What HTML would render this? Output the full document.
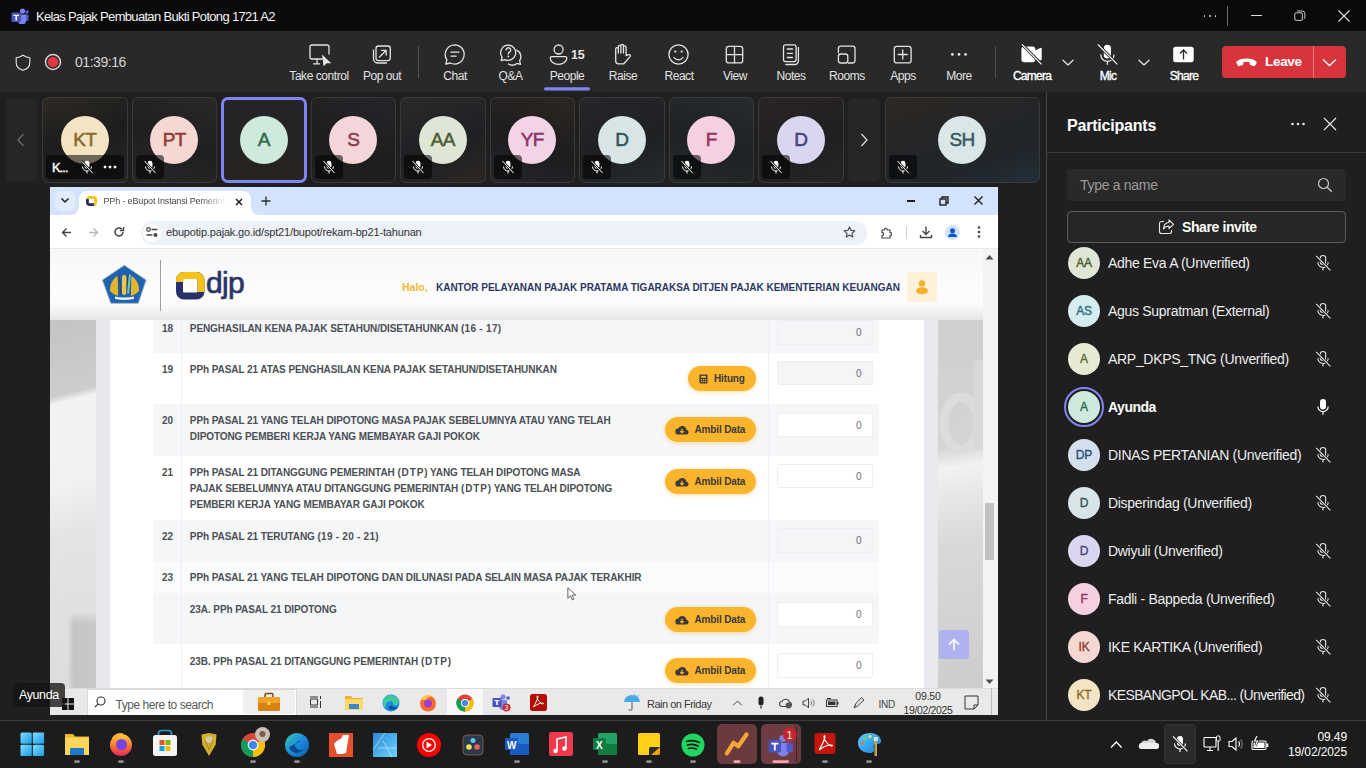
<!DOCTYPE html>
<html><head><meta charset="utf-8">
<style>
*{box-sizing:border-box}
html,body{margin:0;padding:0}
body{width:1366px;height:768px;overflow:hidden;position:relative;background:#1f1f1f;font-family:"Liberation Sans",sans-serif;color:#fff}
.a{position:absolute}
svg{display:block}
/* title bar */
#title{left:0;top:0;width:1366px;height:31px;background:#0a0a0a}
/* toolbar */
#tb{left:0;top:31px;width:1366px;height:61px;background:#292929}
.tbi{position:absolute;top:0;height:61px;width:60px;margin-left:-30px}
.tbi svg{position:absolute;left:20px;top:13px}
.tl{position:absolute;top:69px;width:90px;margin-left:-45px;text-align:center;font-size:12px;line-height:14px;letter-spacing:-0.45px;color:#e2e2e2;white-space:nowrap}
.tl.b{color:#fff;letter-spacing:-0.75px;-webkit-text-stroke:0.35px #fff}
.av{width:48px;height:48px;border-radius:50%;text-align:center;line-height:48px;font-size:19px;letter-spacing:-0.6px;-webkit-text-stroke:0.55px currentColor}
.pav{width:32px;height:32px;border-radius:50%;text-align:center;line-height:32px;font-size:12px;letter-spacing:-0.2px;-webkit-text-stroke:0.35px currentColor}
.pn{left:1108px;font-size:14px;line-height:18px;letter-spacing:-0.3px;color:#ececec;white-space:nowrap}
.tt{font-size:10px;line-height:16.3px;font-weight:bold;letter-spacing:-0.08px;color:#4b4f54;white-space:nowrap}
.btn{height:25px;border-radius:13px;background:#fbb52c;box-shadow:0 1px 4px rgba(251,181,44,.45);font-size:10px;font-weight:bold;color:#3a3a3a;letter-spacing:-0.15px;line-height:13px}
.inp{left:777px;width:95.5px;height:24.5px;border:1px solid #eceef1;border-radius:2px;font-size:10px;line-height:24px;text-align:right;padding-right:10px;color:#707070}
.tbl{position:absolute;top:40px;left:-20px;right:-20px;text-align:center;font-size:12px;letter-spacing:-0.4px;color:#e6e6e6;white-space:nowrap}
</style></head>
<body>
<!-- TITLE BAR -->
<div id="title" class="a">
  <svg class="a" style="left:11px;top:8px" width="18" height="16" viewBox="0 0 18 16">
    <circle cx="11.5" cy="3" r="2.6" fill="#7b83eb"/><circle cx="16" cy="4" r="1.8" fill="#5059c9"/>
    <path d="M13 6.5h4.5v5a2.3 2.3 0 0 1-4.5 0z" fill="#5059c9"/>
    <path d="M7 6.5h8v6a4 4 0 0 1-8 0z" fill="#7b83eb"/>
    <rect x="0.5" y="4.5" width="9.5" height="9.5" rx="1" fill="#4b53bc"/>
    <path d="M2.5 6.8h5.5v1.3H6v4.5H4.5V8.1h-2z" fill="#fff"/>
  </svg>
  <div class="a" style="left:36px;top:9px;font-size:13px;letter-spacing:-0.68px;color:#f2f2f2;white-space:nowrap">Kelas Pajak Pembuatan Bukti Potong 1721 A2</div>
  <div class="a" style="left:1203px;top:15px;width:14px;height:2px">
    <span class="a" style="left:0.5px;top:0;width:1.8px;height:1.8px;border-radius:1px;background:#ddd"></span>
    <span class="a" style="left:6px;top:0;width:1.8px;height:1.8px;border-radius:1px;background:#ddd"></span>
    <span class="a" style="left:11.5px;top:0;width:1.8px;height:1.8px;border-radius:1px;background:#ddd"></span>
  </div>
  <div class="a" style="left:1226.5px;top:6px;width:1px;height:20px;background:#6a6a6a"></div>
  <div class="a" style="left:1251px;top:15px;width:11px;height:1px;background:#ddd"></div>
  <svg class="a" style="left:1294px;top:10px" width="12" height="12" viewBox="0 0 12 12"><rect x="0.8" y="2.8" width="7.6" height="7.6" rx="1.4" fill="none" stroke="#dcdcdc" stroke-width="0.9"/><path d="M3 1h5.2A2.6 2.6 0 0 1 10.8 3.6V8.8" fill="none" stroke="#dcdcdc" stroke-width="0.9"/></svg>
  <svg class="a" style="left:1338px;top:10px" width="12" height="12" viewBox="0 0 12 12"><path d="M0.5 0.5l11 11M11.5 0.5l-11 11" stroke="#ddd" stroke-width="1.1"/></svg>
</div>

<!-- TOOLBAR -->
<div id="tb" class="a">
  <!-- shield -->
  <svg class="a" style="left:15px;top:23px" width="16" height="17" viewBox="0 0 16 17"><path d="M8 1.2C10.5 2.8 12.8 3.6 14.8 3.7v5.2c0 3.4-2.3 5.8-6.8 7.4C3.5 14.7 1.2 12.3 1.2 8.9V3.7C3.2 3.6 5.5 2.8 8 1.2z" fill="none" stroke="#e8e8e8" stroke-width="1.1"/></svg>
  <!-- record -->
  <svg class="a" style="left:44px;top:22px" width="18" height="18" viewBox="0 0 18 18"><circle cx="9" cy="9" r="7.5" fill="none" stroke="#d6d6d6" stroke-width="1.5"/><circle cx="9" cy="9" r="5.3" fill="#e0383e"/></svg>
  <div class="a" style="left:75px;top:23px;font-size:14px;letter-spacing:-0.45px;color:#d4d4d4">01:39:16</div>
</div>
<svg class="a" style="left:0;top:31px" width="1366" height="61" viewBox="0 31 1366 61">
 <g fill="none" stroke="#e4e4e4" stroke-width="1.3" stroke-linecap="round" stroke-linejoin="round">
  <!-- take control -->
  <path d="M322 59H312a2 2 0 0 1-2-2V47a2 2 0 0 1 2-2h15a2 2 0 0 1 2 2v7"/>
  <path d="M317 59.5v4M313.5 63.8h6"/>
  <!-- pop out -->
  <rect x="376" y="46" width="14.3" height="14.6" rx="2.5"/>
  <path d="M373.5 50v8.5a4.5 4.5 0 0 0 4.5 4.5h8.5"/>
  <path d="M379.5 57l6.5-6.5M381.5 50.3h4.7v4.7"/>
  <!-- chat -->
  <path d="M454.7 44.8a9.6 9.6 0 1 1-4.4 18.2l-4.6 1.2 1.2-4.4a9.6 9.6 0 0 1 7.8-15z"/>
  <path d="M451 52.2h8M451 56.2h5"/>
  <!-- q&a -->
<g transform="translate(0.3 0.7)">  <path d="M508 44.5a7.6 7.6 0 1 1-3.6 14.4l-3.6 1 1-3.4a7.6 7.6 0 0 1 6.2-12z"/>
  <path d="M516.5 49.5a7.2 7.2 0 0 1 2.8 10.5l0.9 3.6-3.6-0.9a7.2 7.2 0 0 1-8.5 0.6"/>
  <path d="M505.8 49.3a2.3 2.3 0 1 1 3.4 2.1c-0.8 0.5-1.2 1-1.2 1.9"/>
</g>
  <!-- people -->
  <circle cx="558.6" cy="49.5" r="4.5"/>
  <path d="M550.2 58a1.4 1.4 0 0 1 1.4-1.4h13.8a1.4 1.4 0 0 1 1.4 1.4c0 3.6-3.7 6.3-8.3 6.3s-8.3-2.7-8.3-6.3z"/>
  <!-- raise -->
  <path d="M615.7 61.3V48.9a1.3 1.3 0 0 1 2.6 0V53V46.6a1.3 1.3 0 0 1 2.6 0V53V45.7a1.3 1.3 0 0 1 2.6 0V53V47.2a1.3 1.3 0 0 1 2.6 0v8.4l2.7-0.9a1.2 1.2 0 0 1 1.3 1.9L623.8 63.8H618.6a2.9 2.9 0 0 1-2.9-2.5z"/>
  <!-- react -->
  <circle cx="678.5" cy="54.5" r="9.6"/>
  <path d="M674 57.5a5.5 5.5 0 0 0 9 0"/>
  <!-- view -->
  <rect x="726.3" y="46.3" width="16.4" height="16.6" rx="2.5"/>
  <path d="M734.5 46.5v16.4M726.5 54.6h16"/>
  <!-- notes -->
  <rect x="783.5" y="44.8" width="12.6" height="16.8" rx="2"/>
  <path d="M798.4 47.5v13.5a3.5 3.5 0 0 1-3.5 3.5h-9"/>
  <path d="M787.3 49h5.2M787.3 53.3h5.2M787.3 57.5h5.2"/>
  <!-- rooms -->
  <path d="M838.4 52.8V48.6a2.4 2.4 0 0 1 2.4-2.4h11.8a2.4 2.4 0 0 1 2.4 2.4v12a2.4 2.4 0 0 1-2.4 2.4h-4.4"/>
  <rect x="838.4" y="54" width="9.4" height="9" rx="2.5"/>
  <!-- apps -->
  <rect x="894.3" y="46.3" width="16.8" height="16.6" rx="2.5"/>
  <path d="M902.7 50v9M898.2 54.5h9"/>
  <!-- chevrons -->
  <path d="M1063 60.3l5 4.6 5-4.6M1139 60.3l5 4.6 5-4.6"/>
  <!-- mic off -->
  <path d="M1100.8 54.8a6.6 6.6 0 0 0 13.2 0M1107.4 61.4v3"/>
 </g>
 <!-- take control cursor -->
 <path d="M322 54.5l9.3 8.8h-4.6l-3.2 3z" fill="#e4e4e4"/>
 <!-- more dots -->
 <circle cx="952.4" cy="54.4" r="1.4" fill="#e4e4e4"/><circle cx="959" cy="54.4" r="1.4" fill="#e4e4e4"/><circle cx="965.6" cy="54.4" r="1.4" fill="#e4e4e4"/>
 <!-- react eyes -->
 <circle cx="675.3" cy="51.6" r="1.1" fill="#e4e4e4"/><circle cx="681.7" cy="51.6" r="1.1" fill="#e4e4e4"/>
 <!-- qa dot -->
 <circle cx="508.3" cy="56.5" r="0.9" fill="#e4e4e4"/>
 <!-- separators -->
 <path d="M418.5 46v32M995.5 46v32" stroke="#505050" stroke-width="1"/>
 <!-- camera -->
 <rect x="1021.4" y="46.5" width="14" height="15.7" rx="3" fill="#fff"/>
 <path d="M1035 50.5l5.2-2.5a1 1 0 0 1 1.5 0.9v10.4a1 1 0 0 1-1.5 0.9l-5.2-2.5z" fill="#fff"/>
 <path d="M1022 44.3l19.5 20" stroke="#292929" stroke-width="3"/>
 <path d="M1022 44.3l19.5 20" stroke="#fff" stroke-width="1.2"/>
 <!-- mic -->
 <rect x="1103.8" y="44.8" width="7.2" height="13.8" rx="3.6" fill="#fff"/>
 <path d="M1097.8 44.3l19.5 20" stroke="#292929" stroke-width="3"/>
 <path d="M1097.8 44.3l19.5 20" stroke="#fff" stroke-width="1.2"/>
 <!-- share -->
 <rect x="1173.2" y="46.8" width="20.5" height="15.4" rx="2.5" fill="#fff"/>
 <path d="M1183.5 59.5v-9.3M1180 53.5l3.5-3.5 3.5 3.5" fill="none" stroke="#292929" stroke-width="1.3"/>
 <!-- people underline -->
 <rect x="544" y="87.2" width="46" height="3.2" rx="1.6" fill="#7f85f5"/>
</svg>
<div class="a" style="left:571px;top:48px;font-size:12.5px;font-weight:bold;color:#e4e4e4;letter-spacing:-0.2px">15</div>
<div class="a tl" style="left:319px">Take control</div>
<div class="a tl" style="left:382px">Pop out</div>
<div class="a tl" style="left:455px">Chat</div>
<div class="a tl" style="left:510.5px">Q&amp;A</div>
<div class="a tl" style="left:567px">People</div>
<div class="a tl" style="left:623px">Raise</div>
<div class="a tl" style="left:679px">React</div>
<div class="a tl" style="left:735px">View</div>
<div class="a tl" style="left:791px">Notes</div>
<div class="a tl" style="left:847px">Rooms</div>
<div class="a tl" style="left:903px">Apps</div>
<div class="a tl" style="left:959px">More</div>
<div class="a tl b" style="left:1032px">Camera</div>
<div class="a tl b" style="left:1108px">Mic</div>
<div class="a tl b" style="left:1184px">Share</div>
<!-- leave -->
<div class="a" style="left:1222px;top:46px;width:124px;height:32px;background:#d7353b;border-radius:4px"></div>
<div class="a" style="left:1313px;top:46px;width:1px;height:32px;background:#ec7a7f"></div>
<svg class="a" style="left:1236px;top:56.5px" width="22" height="12" viewBox="0 0 22 12"><path d="M11 1.5c4 0 7.5 1.3 9.2 3a1.6 1.6 0 0 1 0.2 2l-1.3 2a1.5 1.5 0 0 1-1.8 0.6l-2.8-1a1.4 1.4 0 0 1-0.9-1.3V5.1C12.6 4.8 9.4 4.8 7.4 5.1v1.7a1.4 1.4 0 0 1-0.9 1.3l-2.8 1a1.5 1.5 0 0 1-1.8-0.6l-1.3-2a1.6 1.6 0 0 1 0.2-2c1.7-1.7 5.2-3 9.2-3z" fill="#fff"/></svg>
<div class="a" style="left:1265px;top:54px;font-size:13.5px;font-weight:bold;color:#fff;letter-spacing:-0.3px">Leave</div>
<svg class="a" style="left:1322px;top:58px" width="15" height="9" viewBox="0 0 15 9"><path d="M1 1.5l6.5 6 6.5-6" fill="none" stroke="#fff" stroke-width="1.4"/></svg>
<!-- SHARE -->
<div class="a" style="left:0;top:0;width:1366px;height:768px;clip-path:inset(187px 368px 53px 50px)">
<div class="a" style="left:50px;top:187px;width:948px;height:28px;background:#d3e3fd"></div>
<div class="a" style="left:55px;top:191px;width:20px;height:20px;border-radius:6px;background:#e3ecfb"></div>
<svg class="a" style="left:60px;top:197px" width="10" height="7" viewBox="0 0 10 7"><path d="M1.5 1.5l3.5 3.5 3.5-3.5" fill="none" stroke="#1f1f1f" stroke-width="1.5"/></svg>
<div class="a" style="left:79px;top:190.5px;width:172px;height:25px;background:#fff;border-radius:8px 8px 0 0"></div>
<svg class="a" style="left:71px;top:207px" width="8" height="8" viewBox="0 0 8 8"><path d="M8 0v8H0a8 8 0 0 0 8-8z" fill="#fff"/></svg>
<svg class="a" style="left:251px;top:207px" width="8" height="8" viewBox="0 0 8 8"><path d="M0 0v8h8a8 8 0 0 1-8-8z" fill="#fff"/></svg>
<svg class="a" style="left:86px;top:196px" width="11" height="10" viewBox="0 0 11 10"><rect x="1.4" y="1.4" width="8.2" height="7.2" rx="2.2" fill="none" stroke="#f4c21a" stroke-width="2.8"/><path d="M1.4 3v3.4A2.2 2.2 0 0 0 3.6 8.6H8" fill="none" stroke="#26306a" stroke-width="2.8"/></svg>
<div class="a" style="left:103.5px;top:196px;width:124px;overflow:hidden;white-space:nowrap;font-size:9px;line-height:11px;letter-spacing:-0.15px;color:#474747;-webkit-mask-image:linear-gradient(90deg,#000 78%,transparent 98%)">PPh - eBupot Instansi Pemerintah</div>
<svg class="a" style="left:235px;top:198px" width="8" height="8" viewBox="0 0 8 8"><path d="M1 1l6 6M7 1L1 7" stroke="#1f1f1f" stroke-width="1.5"/></svg>
<svg class="a" style="left:261px;top:196px" width="10" height="10" viewBox="0 0 10 10"><path d="M5 0.5v9M0.5 5h9" stroke="#2a2a2a" stroke-width="1.3"/></svg>
<div class="a" style="left:907px;top:200px;width:8px;height:1.5px;background:#1f1f1f"></div>
<svg class="a" style="left:939px;top:196px" width="10" height="10" viewBox="0 0 10 10"><rect x="1" y="3" width="6" height="6" fill="none" stroke="#1f1f1f" stroke-width="1.4"/><path d="M3 3V1h6v6H7" fill="none" stroke="#1f1f1f" stroke-width="1.4"/></svg>
<svg class="a" style="left:974px;top:196px" width="9" height="9" viewBox="0 0 9 9"><path d="M0.5 0.5l8 8M8.5 0.5l-8 8" stroke="#1f1f1f" stroke-width="1.4"/></svg>
<div class="a" style="left:50px;top:215px;width:948px;height:34px;background:#fff;border-bottom:1px solid #e8e8e8"></div>
<svg class="a" style="left:61px;top:227px" width="11" height="11" viewBox="0 0 11 11"><path d="M10 5.5H1.5M5.5 1.5l-4 4 4 4" fill="none" stroke="#474747" stroke-width="1.4"/></svg>
<svg class="a" style="left:88px;top:227px" width="11" height="11" viewBox="0 0 11 11"><path d="M1 5.5h8.5M5.5 1.5l4 4-4 4" fill="none" stroke="#b8b8b8" stroke-width="1.4"/></svg>
<svg class="a" style="left:113px;top:226px" width="12" height="12" viewBox="0 0 12 12"><path d="M10 6a4 4 0 1 1-1.2-2.9" fill="none" stroke="#474747" stroke-width="1.5"/><path d="M10.5 1v3.5H7" fill="none" stroke="#474747" stroke-width="1.5"/></svg>
<div class="a" style="left:141px;top:221px;width:726px;height:24px;border-radius:12px;background:#edf1f8"></div>
<div class="a" style="left:143px;top:224px;width:18px;height:18px;border-radius:50%;background:#fff"></div><svg class="a" style="left:146px;top:227px" width="12" height="11" viewBox="0 0 12 11"><circle cx="2.5" cy="2.5" r="1.8" fill="none" stroke="#474747" stroke-width="1.2"/><path d="M5.5 2.5h6M0.5 8h6" stroke="#474747" stroke-width="1.3"/><circle cx="9.5" cy="8" r="2" fill="#474747"/></svg>
<div class="a" style="left:166px;top:226px;font-size:11px;line-height:13px;letter-spacing:-0.17px;color:#333;white-space:nowrap">ebupotip.pajak.go.id/spt21/bupot/rekam-bp21-tahunan</div>
<svg class="a" style="left:843px;top:226px" width="13" height="13" viewBox="0 0 13 13"><path d="M6.5 1l1.6 3.4 3.7 0.4-2.8 2.5 0.8 3.7-3.3-1.9-3.3 1.9 0.8-3.7L1.2 4.8l3.7-0.4z" fill="none" stroke="#474747" stroke-width="1.1" stroke-linejoin="round"/></svg>
<svg class="a" style="left:880px;top:226px" width="13" height="13" viewBox="0 0 13 13"><path d="M2 4h2.2a1.6 1.6 0 1 1 3.2 0H10v2.3a1.6 1.6 0 1 1 0 3.2V12H2V9.5a1.6 1.6 0 1 0 0-3.2z" fill="none" stroke="#474747" stroke-width="1.2"/></svg>
<div class="a" style="left:906px;top:226px;width:1px;height:13px;background:#d0d0d0"></div>
<svg class="a" style="left:919px;top:225px" width="14" height="14" viewBox="0 0 14 14"><path d="M7 1.5v8M3.5 6l3.5 3.5L10.5 6M1.5 10v2.5h11V10" fill="none" stroke="#474747" stroke-width="1.4"/></svg>
<svg class="a" style="left:945px;top:225px" width="15" height="15" viewBox="0 0 15 15"><circle cx="7.5" cy="7.5" r="7.5" fill="#d3e3fd"/><circle cx="7.5" cy="5.8" r="2.5" fill="#0b57d0"/><path d="M3 12a4.5 3.5 0 0 1 9 0z" fill="#0b57d0"/></svg>
<svg class="a" style="left:977px;top:225px" width="4" height="14" viewBox="0 0 4 14"><circle cx="2" cy="2.5" r="1.3" fill="#474747"/><circle cx="2" cy="7" r="1.3" fill="#474747"/><circle cx="2" cy="11.5" r="1.3" fill="#474747"/></svg>
<div class="a" style="left:50px;top:249px;width:933px;height:439px;background:#fff"></div>
<div class="a" style="left:50px;top:320px;width:46px;height:368px;background:linear-gradient(166deg,#c4c4c4 0%,#cdcdcd 20.5%,#f3f3f3 22.5%,#f1f1f1 45%,#e4e4e4 58%,#dcdcdc 100%)"></div><div class="a" style="left:68px;top:612px;width:28px;height:76px;background:linear-gradient(90deg,rgba(190,190,190,0) 0%,rgba(190,190,190,.8) 20%,rgba(195,195,195,.8) 100%);-webkit-mask-image:linear-gradient(180deg,transparent 0%,#000 15%)"></div>
<div class="a" style="left:96px;top:320px;width:14px;height:368px;background:#e7e8ec"></div>
<div class="a" style="left:924px;top:320px;width:14px;height:368px;background:#e8e9ee"></div>
<div class="a" style="left:938px;top:320px;width:45px;height:368px;background:linear-gradient(172deg,#cfcfcf 0%,#d4d4d4 34%,#f2f2f2 40%,#e8e8e8 47%,#d9d9d9 60%,#cdcdcd 100%)"></div><svg class="a" style="left:938px;top:360px" width="45" height="105" viewBox="0 0 45 105"><ellipse cx="23" cy="63" rx="17" ry="26" fill="none" stroke="#dcdcdc" stroke-width="9"/><rect x="36" y="0" width="9" height="90" fill="#d9d9d9"/></svg><div class="a" style="left:939px;top:630px;width:29.5px;height:29px;border-radius:3px;background:#aeb2ee"></div><svg class="a" style="left:947px;top:637px" width="14" height="15" viewBox="0 0 14 15"><path d="M7 13.5V2.5M2 7.5L7 2.5l5 5" fill="none" stroke="#f4f4ff" stroke-width="1.8"/></svg>
<div class="a" style="left:110px;top:320px;width:814px;height:368px;background:#fff"></div>
<div class="a" style="left:153px;top:310px;width:726px;height:42.5px;background:#f5f6f8"></div>
<div class="a" style="left:181px;top:310px;width:1px;height:42.5px;background:#eef0f3"></div>
<div class="a" style="left:768px;top:310px;width:1px;height:42.5px;background:#eef0f3"></div>
<div class="a tt" style="left:162px;top:321.24px">18</div>
<div class="a tt" style="left:189.8px;top:321.24px">PENGHASILAN KENA PAJAK SETAHUN/DISETAHUNKAN <span style="letter-spacing:0.3px">(16 - 17</span>)</div>
<div class="a inp" style="top:320px;background:#f4f5f7">0</div>
<div class="a" style="left:153px;top:352.5px;width:726px;height:51.5px;background:#ffffff"></div>
<div class="a" style="left:181px;top:352.5px;width:1px;height:51.5px;background:#eef0f3"></div>
<div class="a" style="left:768px;top:352.5px;width:1px;height:51.5px;background:#eef0f3"></div>
<div class="a tt" style="left:162px;top:362.3px">19</div>
<div class="a tt" style="left:189.8px;top:362.3px">PPh PASAL 21 ATAS PENGHASILAN KENA PAJAK SETAHUN/DISETAHUNKAN</div>
<div class="a btn" style="left:688px;top:366px;width:68px"><svg class="a" style="left:11px;top:7.5px" width="9" height="10" viewBox="0 0 9 10"><rect x="0.5" y="0.5" width="8" height="9" rx="1" fill="#3a3a3a"/><rect x="2" y="1.8" width="5" height="2" fill="#fbb52c"/><g fill="#fbb52c"><rect x="2" y="5" width="1.2" height="1.2"/><rect x="4" y="5" width="1.2" height="1.2"/><rect x="6" y="5" width="1.2" height="1.2"/><rect x="2" y="7" width="1.2" height="1.2"/><rect x="4" y="7" width="1.2" height="1.2"/><rect x="6" y="7" width="1.2" height="1.2"/></g></svg><span style="position:absolute;left:26px;top:6px">Hitung</span></div>
<div class="a inp" style="top:360.5px;background:#f4f5f7">0</div>
<div class="a" style="left:153px;top:404px;width:726px;height:51.5px;background:#f5f6f8"></div>
<div class="a" style="left:181px;top:404px;width:1px;height:51.5px;background:#eef0f3"></div>
<div class="a" style="left:768px;top:404px;width:1px;height:51.5px;background:#eef0f3"></div>
<div class="a tt" style="left:162px;top:413.1px">20</div>
<div class="a tt" style="left:189.8px;top:413.1px">PPh PASAL 21 YANG TELAH DIPOTONG MASA PAJAK SEBELUMNYA ATAU YANG TELAH<br>DIPOTONG PEMBERI KERJA YANG MEMBAYAR GAJI POKOK</div>
<div class="a btn" style="left:665px;top:417px;width:91px"><svg class="a" style="left:10px;top:8px" width="14" height="10" viewBox="0 0 14 10"><path d="M3.5 9.5a3 3 0 0 1-0.3-6 4.3 4.3 0 0 1 8.2 1.2 2.4 2.4 0 0 1-0.4 4.8z" fill="#3a3a3a"/><path d="M7 3.8v4M5.2 6.2L7 8l1.8-1.8" fill="none" stroke="#fbb52c" stroke-width="1.2"/></svg><span style="position:absolute;left:29.5px;top:6px">Ambil Data</span></div>
<div class="a inp" style="top:412.5px;background:#fff">0</div>
<div class="a" style="left:153px;top:455.5px;width:726px;height:64.89999999999998px;background:#ffffff"></div>
<div class="a" style="left:181px;top:455.5px;width:1px;height:64.89999999999998px;background:#eef0f3"></div>
<div class="a" style="left:768px;top:455.5px;width:1px;height:64.89999999999998px;background:#eef0f3"></div>
<div class="a tt" style="left:162px;top:464.6px">21</div>
<div class="a tt" style="left:189.8px;top:464.6px">PPh PASAL 21 DITANGGUNG PEMERINTAH <span style="letter-spacing:0.9px">(DTP</span>) YANG TELAH DIPOTONG MASA<br>PAJAK SEBELUMNYA ATAU DITANGGUNG PEMERINTAH <span style="letter-spacing:0.9px">(DTP</span>) YANG TELAH DIPOTONG<br>PEMBERI KERJA YANG MEMBAYAR GAJI POKOK</div>
<div class="a btn" style="left:665px;top:468.5px;width:91px"><svg class="a" style="left:10px;top:8px" width="14" height="10" viewBox="0 0 14 10"><path d="M3.5 9.5a3 3 0 0 1-0.3-6 4.3 4.3 0 0 1 8.2 1.2 2.4 2.4 0 0 1-0.4 4.8z" fill="#3a3a3a"/><path d="M7 3.8v4M5.2 6.2L7 8l1.8-1.8" fill="none" stroke="#fbb52c" stroke-width="1.2"/></svg><span style="position:absolute;left:29.5px;top:6px">Ambil Data</span></div>
<div class="a inp" style="top:463.5px;background:#fff">0</div>
<div class="a" style="left:153px;top:520.4px;width:726px;height:42.0px;background:#f5f6f8"></div>
<div class="a" style="left:181px;top:520.4px;width:1px;height:42.0px;background:#eef0f3"></div>
<div class="a" style="left:768px;top:520.4px;width:1px;height:42.0px;background:#eef0f3"></div>
<div class="a tt" style="left:162px;top:528.8px">22</div>
<div class="a tt" style="left:189.8px;top:528.8px">PPh PASAL 21 TERUTANG <span style="letter-spacing:0.25px">(19 - 20 - 21</span>)</div>
<div class="a inp" style="top:528.3px;background:#f4f5f7">0</div>
<div class="a" style="left:153px;top:562.4px;width:726px;height:30.800000000000068px;background:#fafbfc"></div>
<div class="a" style="left:181px;top:562.4px;width:1px;height:30.800000000000068px;background:#eef0f3"></div>
<div class="a" style="left:768px;top:562.4px;width:1px;height:30.800000000000068px;background:#eef0f3"></div>
<div class="a tt" style="left:162px;top:570px">23</div>
<div class="a tt" style="left:189.8px;top:570px">PPh PASAL 21 YANG TELAH DIPOTONG DAN DILUNASI PADA SELAIN MASA PAJAK TERAKHIR</div>
<div class="a" style="left:153px;top:593.2px;width:726px;height:51.19999999999993px;background:#f5f6f8"></div>
<div class="a" style="left:181px;top:593.2px;width:1px;height:51.19999999999993px;background:#eef0f3"></div>
<div class="a" style="left:768px;top:593.2px;width:1px;height:51.19999999999993px;background:#eef0f3"></div>
<div class="a tt" style="left:189.8px;top:602.3px">23A. PPh PASAL 21 DIPOTONG</div>
<div class="a btn" style="left:665px;top:606.6px;width:91px"><svg class="a" style="left:10px;top:8px" width="14" height="10" viewBox="0 0 14 10"><path d="M3.5 9.5a3 3 0 0 1-0.3-6 4.3 4.3 0 0 1 8.2 1.2 2.4 2.4 0 0 1-0.4 4.8z" fill="#3a3a3a"/><path d="M7 3.8v4M5.2 6.2L7 8l1.8-1.8" fill="none" stroke="#fbb52c" stroke-width="1.2"/></svg><span style="position:absolute;left:29.5px;top:6px">Ambil Data</span></div>
<div class="a inp" style="top:602.4px;background:#fff">0</div>
<div class="a" style="left:153px;top:644.4px;width:726px;height:55.60000000000002px;background:#ffffff"></div>
<div class="a" style="left:181px;top:644.4px;width:1px;height:55.60000000000002px;background:#eef0f3"></div>
<div class="a" style="left:768px;top:644.4px;width:1px;height:55.60000000000002px;background:#eef0f3"></div>
<div class="a tt" style="left:189.8px;top:653.5px">23B. PPh PASAL 21 DITANGGUNG PEMERINTAH <span style="letter-spacing:0.9px">(DTP</span>)</div>
<div class="a btn" style="left:665px;top:658px;width:91px"><svg class="a" style="left:10px;top:8px" width="14" height="10" viewBox="0 0 14 10"><path d="M3.5 9.5a3 3 0 0 1-0.3-6 4.3 4.3 0 0 1 8.2 1.2 2.4 2.4 0 0 1-0.4 4.8z" fill="#3a3a3a"/><path d="M7 3.8v4M5.2 6.2L7 8l1.8-1.8" fill="none" stroke="#fbb52c" stroke-width="1.2"/></svg><span style="position:absolute;left:29.5px;top:6px">Ambil Data</span></div>
<div class="a inp" style="top:653.4px;background:#fff">0</div>
<div class="a" style="left:50px;top:249px;width:933px;height:71px;background:linear-gradient(180deg,#f7f7f7 0%,#fdfdfd 60%,#fafafa 80%,#e6e6e6 100%)"></div>
<svg class="a" style="left:101px;top:264px" width="47" height="42" viewBox="0 0 47 42"><path d="M23.3 1.3L45.1 16 37.3 39.3H9.8L1.4 16z" fill="#1f63b0" stroke="#9fb1c4" stroke-width="0.9"/><path d="M16.5 12c-5 3-8 9-7.5 15 2 2 5 4 8 5 0-7 0-14-0.5-20z" fill="#e6b62a"/><path d="M30.5 12c5 3 8 9 7.5 15-2 2-5 4-8 5 0-7 0-14 0.5-20z" fill="#e6b62a"/><rect x="21" y="11" width="4.4" height="20" rx="2.2" fill="#e9c35a"/><path d="M18.3 11.5l1.7 19M26.8 11l-0.8 19" stroke="#3b4b3a" stroke-width="1.2"/><path d="M29 10.5l-2 19" stroke="#7cc4c0" stroke-width="2"/><path d="M14 32.5q9.3 2 19 0v2.5q-9.7 2-19 0z" fill="#e8f0f8"/></svg>
<div class="a" style="left:160px;top:260px;width:1.3px;height:51px;background:#9ba1a8"></div>
<svg class="a" style="left:176px;top:272px" width="29" height="28" viewBox="0 0 29 28"><rect x="3.5" y="3.5" width="21.5" height="20.5" rx="4.5" fill="none" stroke="#26306a" stroke-width="7"/><path d="M3.5 10V8A4.5 4.5 0 0 1 8 3.5h12.5A4.5 4.5 0 0 1 25 8v12" fill="none" stroke="#f4c21a" stroke-width="7"/></svg>
<div class="a" style="left:206px;top:266.3px;font-size:30px;line-height:34px;letter-spacing:-0.7px;color:#2b3468;-webkit-text-stroke:0.7px #2b3468">djp</div>
<div class="a" style="left:402px;top:281px;font-size:10.5px;line-height:13px;font-weight:bold;color:#f5b52e;white-space:nowrap">Halo,</div>
<div class="a" style="left:436px;top:281px;font-size:10px;line-height:13px;font-weight:bold;letter-spacing:-0.02px;color:#2d3766;white-space:nowrap">KANTOR PELAYANAN PAJAK PRATAMA TIGARAKSA DITJEN PAJAK KEMENTERIAN KEUANGAN</div>
<div class="a" style="left:907px;top:272px;width:30px;height:30px;border-radius:3px;background:#fdf1da"></div>
<svg class="a" style="left:915px;top:279px" width="14" height="16" viewBox="0 0 14 16"><circle cx="7" cy="4.5" r="3.2" fill="#f2b32a"/><ellipse cx="7" cy="11.8" rx="6" ry="3.5" fill="#f2b32a"/></svg>
<div class="a" style="left:983px;top:249px;width:15px;height:439px;background:#f3f3f3"></div>
<svg class="a" style="left:985px;top:254px" width="9" height="6" viewBox="0 0 9 6"><path d="M0.5 5.5L4.5 1l4 4.5z" fill="#505050"/></svg>
<svg class="a" style="left:985px;top:679px" width="9" height="6" viewBox="0 0 9 6"><path d="M0.5 0.5L4.5 5l4-4.5z" fill="#505050"/></svg>
<div class="a" style="left:985px;top:503px;width:9px;height:57px;background:#c1c1c1"></div>
<!--SHARE_TABLE-->
<svg class="a" style="left:567px;top:586.5px" width="9.5" height="14" viewBox="0 0 12 18"><path d="M1 1v13.5l3.3-3.2 2.3 5.3 2.2-1-2.3-5.2h4.6z" fill="#fff" stroke="#222" stroke-width="0.9" stroke-linejoin="round"/></svg>
<!-- inner taskbar -->
<div class="a" style="left:50px;top:688px;width:948px;height:27px;background:#e9e9e9;border-top:1px solid #dcdcdc"></div>
<div class="a" style="left:87px;top:688.5px;width:210px;height:26.5px;background:#fff;border:1px solid #d6d6d6;border-bottom:none"></div>
<div class="a" style="left:243px;top:690px;width:52px;height:24px;background:#efefef;border-radius:3px"></div>
<div class="a" style="left:447px;top:688.5px;width:36px;height:26.5px;background:#f7f7f7"></div>
<svg class="a" style="left:62px;top:697.5px" width="12" height="12" viewBox="0 0 12 12"><g fill="#111"><rect x="0" y="0" width="5.5" height="5.5"/><rect x="6.5" y="0" width="5.5" height="5.5"/><rect x="0" y="6.5" width="5.5" height="5.5"/><rect x="6.5" y="6.5" width="5.5" height="5.5"/></g></svg>
<svg class="a" style="left:94px;top:696px" width="12" height="12" viewBox="0 0 12 12"><circle cx="7" cy="5" r="4" fill="none" stroke="#333" stroke-width="1.1"/><path d="M4.2 7.8L1 11" stroke="#333" stroke-width="1.2"/></svg>
<div class="a" style="left:115.5px;top:697.5px;font-size:12px;line-height:14px;letter-spacing:-0.45px;color:#5a5a5a;white-space:nowrap">Type here to search</div>
<svg class="a" style="left:257px;top:692px" width="24" height="20" viewBox="0 0 24 20"><path d="M8 5V3a1.5 1.5 0 0 1 1.5-1.5h5A1.5 1.5 0 0 1 16 3v2" fill="none" stroke="#7a4a10" stroke-width="1.5"/><rect x="1" y="5" width="22" height="14" rx="1.5" fill="#d9820e"/><rect x="1" y="5" width="22" height="6" rx="1.5" fill="#f0a52a"/><rect x="10.5" y="10" width="3" height="3" fill="#ffd54a"/></svg>
<svg class="a" style="left:309px;top:695px" width="14" height="14" viewBox="0 0 14 14"><path d="M1 2h8M1 12h8M1.5 4h7v6h-7z" fill="none" stroke="#333" stroke-width="1"/><path d="M11.5 1v3M11.5 6v7" stroke="#333" stroke-width="1"/></svg>
<svg class="a" style="left:345px;top:695px" width="18" height="16" viewBox="0 0 18 16"><path d="M0 1h6l2 2h10v12H0z" fill="#e7b53a"/><rect x="0" y="4" width="18" height="11" fill="#ffd866"/><rect x="4" y="9" width="10" height="5" fill="#3a86c8"/></svg>
<svg class="a" style="left:382px;top:694px" width="18" height="18" viewBox="0 0 18 18"><circle cx="9" cy="9" r="8.5" fill="#1a8ae0"/><path d="M1 10a8 8 0 0 1 16-2c0 3-3 4-5 3-2-1 0-3-3-4-4 0-6 3-5 7-2-1-3-2-3-4z" fill="#3cc8a0"/><path d="M6 14c3 3 8 2 10-1-3 1-6 0-7-2" fill="#0c4f9a"/></svg>
<svg class="a" style="left:419px;top:694px" width="18" height="18" viewBox="0 0 18 18"><circle cx="9" cy="9.5" r="8" fill="#ff6a2b"/><circle cx="9" cy="9.5" r="4" fill="#9a3fd8"/><path d="M2 6c2-5 8-6 11-3-3-1-5 1-6 3z" fill="#ffc53a"/></svg>
<svg class="a" style="left:456px;top:694px" width="18" height="18" viewBox="0 0 18 18"><circle cx="9" cy="9" r="8.5" fill="#db4437"/><path d="M9 9L16.4 4.7a8.5 8.5 0 0 1-7.4 12.8z" fill="#f4c20d"/><path d="M9 9L1.6 4.7a8.5 8.5 0 0 0 7.4 12.8z" fill="#0f9d58"/><circle cx="9" cy="9" r="4" fill="#fff"/><circle cx="9" cy="9" r="3.1" fill="#4285f4"/></svg>
<svg class="a" style="left:492px;top:694px" width="20" height="18" viewBox="0 0 20 18"><circle cx="11" cy="3" r="2.5" fill="#7b83eb"/><circle cx="16" cy="4" r="1.8" fill="#5059c9"/><path d="M7 6h8v6a4 4 0 0 1-8 0z" fill="#7b83eb"/><rect x="0.5" y="4" width="9" height="9" rx="1" fill="#4b53bc"/><path d="M2.5 6h5v1.3H5.8V11H4.2V7.3H2.5z" fill="#fff"/><circle cx="14.5" cy="13.5" r="4" fill="#c4262e"/><text x="12.6" y="16.3" font-family="Liberation Sans" font-size="7" fill="#fff">3</text></svg>
<svg class="a" style="left:530px;top:694px" width="17" height="17" viewBox="0 0 17 17"><rect x="0" y="0" width="17" height="17" rx="2.5" fill="#b30b00"/><path d="M3.5 13c1.5-2.5 3.5-7 4.5-10 0-1.5-1-1.5-1 0 0 2.5 3 6 5.5 7 1.5 0 1.5-1 0-1-2.5 0-6 1.5-9 4" fill="none" stroke="#fff" stroke-width="1"/></svg>
<svg class="a" style="left:623px;top:693px" width="18" height="19" viewBox="0 0 18 19"><path d="M1 9a8 7 0 0 1 16 0z" fill="#4aa8e8"/><path d="M9 9v7a1.5 1.5 0 0 1-3 0" fill="none" stroke="#555" stroke-width="1"/><g fill="#4aa8e8"><circle cx="12" cy="2" r="0.8"/><circle cx="15" cy="3" r="0.8"/><circle cx="14" cy="5.5" r="0.8"/></g></svg>
<div class="a" style="left:647px;top:697.5px;font-size:11px;line-height:13px;letter-spacing:-0.5px;color:#3a3a3a;white-space:nowrap">Rain on Friday</div>
<svg class="a" style="left:732px;top:700px" width="11" height="6" viewBox="0 0 11 6"><path d="M1 5.5l4.5-4.5 4.5 4.5" fill="none" stroke="#444" stroke-width="1"/></svg>
<svg class="a" style="left:757px;top:696px" width="8" height="13" viewBox="0 0 8 13"><rect x="1.5" y="0.5" width="5" height="9" rx="2.5" fill="#222"/><path d="M4 10v2.5" stroke="#222" stroke-width="1.2"/></svg>
<svg class="a" style="left:779px;top:697px" width="13" height="12" viewBox="0 0 13 12"><path d="M3 9.5a2.5 2.5 0 0 1 0-5 4 4 0 0 1 7.5 1 2 2 0 0 1 0 4z" fill="none" stroke="#444" stroke-width="1.1"/><circle cx="9.5" cy="8.5" r="3" fill="#555"/></svg>
<svg class="a" style="left:802px;top:697px" width="13" height="12" viewBox="0 0 13 12"><path d="M1 4h2.5l3-3v10l-3-3H1z" fill="none" stroke="#444" stroke-width="1"/><path d="M8.5 4a2.5 2.5 0 0 1 0 4M10.5 2.5a4.5 4.5 0 0 1 0 7" fill="none" stroke="#777" stroke-width="1"/></svg>
<svg class="a" style="left:826px;top:698px" width="13" height="10" viewBox="0 0 13 10"><rect x="0.5" y="2" width="10.5" height="6.5" fill="none" stroke="#333" stroke-width="1"/><rect x="2" y="3.5" width="7.5" height="3.5" fill="#333"/><rect x="11" y="4" width="1.5" height="2.5" fill="#333"/><path d="M1 0.5h4" stroke="#333" stroke-width="1"/></svg>
<svg class="a" style="left:853px;top:696px" width="12" height="13" viewBox="0 0 12 13"><path d="M1 12l1.5-4 6-6.5 2.5 2.5-6.5 6z" fill="none" stroke="#444" stroke-width="1"/><path d="M2 9l2 2" stroke="#444" stroke-width="1"/></svg>
<div class="a" style="left:878.5px;top:697.5px;font-size:10px;line-height:13px;letter-spacing:-0.2px;color:#444">IND</div>
<div class="a" style="left:898px;top:690px;width:60px;text-align:center;font-size:10.5px;line-height:13px;letter-spacing:-0.2px;color:#333">09.50</div>
<div class="a" style="left:898px;top:703.5px;width:60px;text-align:center;font-size:10.5px;line-height:13px;letter-spacing:-0.35px;color:#333">19/02/2025</div>
<svg class="a" style="left:964px;top:695px" width="15" height="15" viewBox="0 0 15 15"><path d="M1 1h13v9l-4 4H1z" fill="none" stroke="#333" stroke-width="1"/><path d="M10 14v-4h4" fill="none" stroke="#333" stroke-width="1"/></svg>
<div class="a" style="left:991px;top:688px;width:1px;height:27px;background:#bdbdbd"></div>
</div>
<div class="a" style="left:12.5px;top:683px;width:52px;height:23.5px;border-radius:4px;background:rgba(20,20,20,.78)"></div>
<div class="a" style="left:19px;top:688px;font-size:12.5px;line-height:14px;letter-spacing:-0.4px;color:#fff">Ayunda</div>
<!-- TASKBAR -->
<div class="a" style="left:0;top:720px;width:1366px;height:48px;background:#1c1c1c;border-top:1px solid #3d3d3d"></div>
<div class="a" style="left:717px;top:724px;width:40px;height:40px;border-radius:5px;background:#6b3a3e"></div>
<div class="a" style="left:765px;top:724px;width:36px;height:40px;border-radius:5px;background:#6b3a3e"></div>
<div class="a" style="left:761px;top:724px;width:36px;height:40px;border-radius:5px;background:#6e3b40;border-right:1px solid #3e2527"></div>
<svg class="a" style="left:0;top:720px" width="1366" height="48" viewBox="0 720 1366 48">
<defs>
 <linearGradient id="gwin" x1="0" y1="0" x2="1" y2="1"><stop offset="0" stop-color="#7ee0ff"/><stop offset="1" stop-color="#1a9ae8"/></linearGradient>
 <linearGradient id="gff" x1="0" y1="0" x2="0" y2="1"><stop offset="0" stop-color="#ffd43a"/><stop offset=".5" stop-color="#ff7a2b"/><stop offset="1" stop-color="#e8255a"/></linearGradient>
 <linearGradient id="gedge" x1="0" y1="0" x2="1" y2="1"><stop offset="0" stop-color="#37c9a4"/><stop offset=".5" stop-color="#1b8be0"/><stop offset="1" stop-color="#0c59a8"/></linearGradient>
 <linearGradient id="gaff" x1="0" y1="0" x2="1" y2="1"><stop offset="0" stop-color="#2e86d6"/><stop offset="1" stop-color="#6cd4ff"/></linearGradient>
 <linearGradient id="gpal" x1="0" y1="0" x2="1" y2="1"><stop offset="0" stop-color="#58d0ff"/><stop offset="1" stop-color="#1a7fdc"/></linearGradient>
</defs>
<!-- windows -->
<rect x="20.5" y="732.5" width="11.3" height="11.3" rx="1.5" fill="url(#gwin)"/><rect x="32.8" y="732.5" width="11.3" height="11.3" rx="1" fill="url(#gwin)"/>
<rect x="20.5" y="744.8" width="11.3" height="11.3" rx="1" fill="url(#gwin)"/><rect x="32.8" y="744.8" width="11.3" height="11.3" rx="1.5" fill="url(#gwin)"/>
<!-- explorer -->
<path d="M65 734h8l2 2.5h14v18.5H65z" fill="#e9b62e"/><rect x="65" y="737.5" width="24" height="17.5" rx="1" fill="#ffd659"/><rect x="70" y="748" width="14" height="7" rx="1" fill="#1e78c8"/>
<!-- firefox -->
<circle cx="121" cy="745" r="11" fill="url(#gff)"/><circle cx="121.5" cy="744.5" r="5.5" fill="#7542e5"/><path d="M112 738c3-5 9-6 12-4-4 0-6 2-7 5z" fill="#ffb02e"/>
<!-- store -->
<path d="M158.5 735.5v-2a3 3 0 0 1 3-3h7a3 3 0 0 1 3 3v2" fill="none" stroke="#2a9ad8" stroke-width="1.6"/>
<rect x="153" y="735" width="24" height="21" rx="2.5" fill="#f4f4f4"/>
<rect x="159.5" y="740" width="5" height="5" fill="#f25022"/><rect x="165.5" y="740" width="5" height="5" fill="#7fba00"/><rect x="159.5" y="746" width="5" height="5" fill="#00a4ef"/><rect x="165.5" y="746" width="5" height="5" fill="#ffb900"/>
<!-- gold shield -->
<path d="M201.5 734.5l7.5-1.5 7.5 1.5-0.8 10-6.7 11.5-6.7-11.5z" fill="#d4b02c"/><path d="M205 740l4 10 4-10" fill="none" stroke="#a8861a" stroke-width="1"/><circle cx="209" cy="739.5" r="3.3" fill="#cfcab0"/>
<!-- chrome -->
<circle cx="253" cy="745" r="12" fill="#db4437"/><path d="M253 745L263.4 739a12 12 0 0 1-10.4 18z" fill="#f4c20d"/><path d="M253 745l-10.4-6a12 12 0 0 0 10.4 18z" fill="#0f9d58"/>
<circle cx="253" cy="745" r="5.4" fill="#fff"/><circle cx="253" cy="745" r="4.3" fill="#4285f4"/>
<circle cx="262.5" cy="734.5" r="7.5" fill="#cbbfb4"/><circle cx="262.5" cy="734" r="3" fill="#7a5a48"/>
<!-- edge -->
<circle cx="297" cy="745" r="12" fill="url(#gedge)"/><path d="M289 747a8 8 0 0 0 14 3 7 7 0 0 1-8-4c0-3 3-5 6-5" fill="#0b4a8c"/><circle cx="301" cy="745" r="3.5" fill="#1b1b1b" opacity=".0"/>
<!-- pdf orange -->
<rect x="329" y="733" width="24" height="24" fill="#e3502b"/><path d="M334 744c2-3 5-5 7-5l2-4h6l-3 18c-2 1-6 1-9 1z" fill="#fff"/>
<!-- affinity -->
<rect x="373" y="733" width="24" height="24" fill="url(#gaff)"/><path d="M373 750l12-17M378 748h19M383 741l9 16" stroke="#cdeeff" stroke-width="0.8" fill="none" opacity=".8"/>
<!-- yt music -->
<circle cx="429" cy="745" r="12" fill="#ff0000"/><circle cx="429" cy="745" r="6.3" fill="none" stroke="#fff" stroke-width="1.3"/><path d="M426.5 741.5l5.5 3.5-5.5 3.5z" fill="#fff"/>
<!-- davinci -->
<rect x="463" y="735" width="20" height="20" rx="4" fill="#2a3a4a" stroke="#8a6a4a" stroke-width="0.8"/><circle cx="473" cy="740.5" r="2.5" fill="#5ec8ff"/><circle cx="469" cy="747" r="2.8" fill="#e8e05a"/><circle cx="477" cy="747" r="2.8" fill="#f06060"/>
<!-- word -->
<rect x="510" y="733" width="19" height="22" rx="1.5" fill="#2b7cd3"/><rect x="510" y="744" width="19" height="11" fill="#185abd"/><rect x="505" y="738" width="13" height="12" rx="1" fill="#185abd"/><text x="507" y="748.5" font-family="Liberation Sans" font-size="10" font-weight="bold" fill="#fff">W</text>
<!-- apple music -->
<rect x="549" y="732" width="24" height="24" rx="2" fill="#f0394c"/><path d="M557 751v-12l9-2v11" fill="none" stroke="#fff" stroke-width="1.6"/><circle cx="555.5" cy="751" r="2.2" fill="#fff"/><circle cx="564.5" cy="748.5" r="2.2" fill="#fff"/>
<!-- excel -->
<rect x="598" y="733" width="19" height="22" rx="1.5" fill="#21a366"/><rect x="598" y="744" width="19" height="11" fill="#107c41"/><rect x="593" y="738" width="13" height="12" rx="1" fill="#107c41"/><text x="596" y="748.5" font-family="Liberation Sans" font-size="10" font-weight="bold" fill="#fff">X</text>
<!-- sticky -->
<rect x="638" y="733" width="22" height="22" rx="1.5" fill="#ffcf1a"/><path d="M649 755v-6a2 2 0 0 1 2-2h9v8z" fill="#2c2c2c"/><path d="M660 747l-9 8h7a2 2 0 0 0 2-2z" fill="#f0a500"/>
<!-- spotify -->
<circle cx="693" cy="745" r="11.5" fill="#1ed760"/><path d="M686.5 741.5c4.5-1.5 9-1 13 1M687.5 745c3.5-1 7.5-0.7 10.5 1M688.5 748.5c3-0.8 5.5-0.5 8 0.7" fill="none" stroke="#191414" stroke-width="1.6" stroke-linecap="round"/>
<!-- messenger bolt -->
<path d="M726.8 753.5L733.5 742.8 738.3 746.3 746.5 734.5" fill="none" stroke="#f5a634" stroke-width="4.2" stroke-linecap="round" stroke-linejoin="round"/>
<!-- teams -->
<circle cx="783" cy="738.5" r="3.6" fill="#7b83eb"/><circle cx="789.5" cy="740" r="2.6" fill="#5059c9"/><path d="M777 743h12v7.5a6 6 0 0 1-12 0z" fill="#7b83eb"/><path d="M786.5 743.5h6.5v5.5a3.2 3.2 0 0 1-6.5 0.5z" fill="#5059c9"/>
<rect x="768.5" y="740" width="12.5" height="12.5" rx="1.2" fill="#4b53bc"/><path d="M771.3 742.8h7v1.7h-2.6v6h-1.8v-6h-2.6z" fill="#fff"/>
<circle cx="789.7" cy="734.5" r="7" fill="#c4262e"/><text x="786.8" y="738.5" font-family="Liberation Sans" font-size="10" fill="#fff">1</text>
<!-- acrobat -->
<rect x="814.5" y="733" width="21" height="21" rx="3" fill="#c4140c"/><path d="M819 750c2-3 5-9 6-13 0-2-1-2-1 0 0 3 4 8 7 9 2 0 2-1 0-1-3 0-8 2-12 5" fill="none" stroke="#fff" stroke-width="1.1"/>
<!-- paint -->
<path d="M870 733c7 0 11 4 11 8 0 3-3 3-5 3s-3 2-2 4c1 3-1 5-4 5-7 0-12-4-12-10s5-10 12-10z" fill="url(#gpal)"/><circle cx="865" cy="738.5" r="1.6" fill="#7fd04a"/><circle cx="870" cy="736.5" r="1.6" fill="#ffd84a"/><circle cx="862" cy="743" r="1.6" fill="#ff6a4a"/>
<rect x="874.5" y="740" width="2.5" height="16" fill="#c9a050"/><rect x="873.8" y="737" width="4" height="4" fill="#e8e0c0"/>
<!-- indicators -->
<g fill="#8b8b8b"><rect x="74" y="760.3" width="6" height="2.6" rx="1.3"/><rect x="118" y="760.3" width="6" height="2.6" rx="1.3"/><rect x="250" y="760.3" width="6" height="2.6" rx="1.3"/><rect x="294" y="760.3" width="6" height="2.6" rx="1.3"/>
<rect x="514" y="760.3" width="6" height="2.6" rx="1.3"/><rect x="602" y="760.3" width="6" height="2.6" rx="1.3"/><rect x="646" y="760.3" width="6" height="2.6" rx="1.3"/><rect x="690" y="760.3" width="6" height="2.6" rx="1.3"/>
<rect x="822" y="760.3" width="6" height="2.6" rx="1.3"/><rect x="866" y="760.3" width="6" height="2.6" rx="1.3"/></g>
<rect x="733.5" y="760.3" width="7" height="2.6" rx="1.3" fill="#f0a8b0"/><rect x="772.5" y="760.3" width="16.5" height="2.6" rx="1.3" fill="#f0a8b0"/>
<!-- tray -->
<path d="M1111 747.5l5.3-5.5 5.3 5.5" fill="none" stroke="#fff" stroke-width="1.3"/>
<path d="M1141 749h15a3 3 0 0 0 0-6 5 5 0 0 0-9-2 4 4 0 0 0-6 4 2 2 0 0 0 0 4z" fill="#d8d8d8"/><path d="M1141 749h15a3 3 0 0 0 0-6l-13 0a3 3 0 0 0-2 6z" fill="#f0f0f0"/>
</svg>
<div class="a" style="left:1164px;top:724px;width:32px;height:40px;border-radius:4px;background:#2a2a2a;border:1px solid #353535"></div>
<svg class="a" style="left:1171px;top:735px" width="18" height="18" viewBox="0 0 18 18"><rect x="6" y="1" width="6" height="10" rx="3" fill="#fff"/><path d="M3.5 8.5a5.5 5.5 0 0 0 11 0M9 14v3" fill="none" stroke="#fff" stroke-width="1.2"/><path d="M2 1.3l14.5 15" stroke="#2a2a2a" stroke-width="2.6"/><path d="M2 1.3l14.5 15" stroke="#fff" stroke-width="1.1"/></svg>
<svg class="a" style="left:1203px;top:735px" width="20" height="18" viewBox="0 0 20 18"><rect x="1" y="2.5" width="12" height="9.5" rx="0.8" fill="none" stroke="#fff" stroke-width="1.1"/><path d="M7 12v3M4 15.5h6" stroke="#fff" stroke-width="1.1"/><rect x="13.5" y="1" width="3.5" height="5" rx="0.8" fill="none" stroke="#fff" stroke-width="1"/><path d="M15.2 6v10" stroke="#fff" stroke-width="1.1"/></svg>
<svg class="a" style="left:1228px;top:736px" width="17" height="16" viewBox="0 0 17 16"><path d="M1 5.5h3l4-3.5v12l-4-3.5H1z" fill="none" stroke="#fff" stroke-width="1.1"/><path d="M10.5 5.5a3.5 3.5 0 0 1 0 5" fill="none" stroke="#fff" stroke-width="1.1"/><path d="M12.5 3.5a6.5 6.5 0 0 1 0 9" fill="none" stroke="#7a7a7a" stroke-width="1.1"/></svg>
<svg class="a" style="left:1251px;top:735px" width="18" height="18" viewBox="0 0 18 18"><rect x="1" y="6" width="14" height="8.5" rx="1.2" fill="none" stroke="#fff" stroke-width="1.1"/><rect x="15.5" y="8.5" width="1.8" height="3.5" fill="#fff"/><rect x="2.5" y="7.5" width="11" height="5.5" fill="#fff"/><path d="M6 1L3.5 6h3l-2 5" fill="none" stroke="#1c1c1c" stroke-width="2.4"/><path d="M6 1L3.5 6h3l-2 5" fill="none" stroke="#fff" stroke-width="1.1"/></svg>
<div class="a" style="left:1247px;top:730px;width:100px;text-align:right;font-size:12px;line-height:14px;color:#fff;letter-spacing:-0.1px">09.49</div>
<div class="a" style="left:1247px;top:745px;width:100px;text-align:right;font-size:12px;line-height:14px;color:#fff;letter-spacing:-0.1px">19/02/2025</div>
<!-- PANEL -->
<div class="a" style="left:1046px;top:92px;width:320px;height:628px;background:#1f1f1f;border-left:1px solid #454545"></div>
<div class="a" style="left:1047px;top:152px;width:319px;height:1px;background:#3b3b3b"></div>
<div class="a" style="left:1067px;top:116px;font-size:16px;line-height:20px;font-weight:bold;letter-spacing:-0.2px;color:#fff">Participants</div>
<svg class="a" style="left:1291px;top:122px" width="14" height="4" viewBox="0 0 14 4"><circle cx="1.5" cy="2" r="1.3" fill="#e6e6e6"/><circle cx="7" cy="2" r="1.3" fill="#e6e6e6"/><circle cx="12.5" cy="2" r="1.3" fill="#e6e6e6"/></svg>
<svg class="a" style="left:1323px;top:117px" width="14" height="14" viewBox="0 0 14 14"><path d="M1 1l12 12M13 1L1 13" stroke="#e6e6e6" stroke-width="1.2"/></svg>
<div class="a" style="left:1067px;top:169px;width:279px;height:32px;border-radius:4px;background:#292929"></div>
<div class="a" style="left:1080px;top:177px;font-size:14px;line-height:16px;letter-spacing:-0.3px;color:#9a9a9a">Type a name</div>
<svg class="a" style="left:1317px;top:177px" width="16" height="16" viewBox="0 0 16 16"><circle cx="6.5" cy="6.5" r="5" fill="none" stroke="#c8c8c8" stroke-width="1.2"/><path d="M10.2 10.2l4.6 4.6" stroke="#c8c8c8" stroke-width="1.3"/></svg>
<div class="a" style="left:1067px;top:211px;width:279px;height:32px;border-radius:4px;background:#262626;border:1px solid #5c5c5c"></div>
<svg class="a" style="left:1158px;top:218px" width="17" height="17" viewBox="0 0 17 17"><path d="M6 3.5H3.5a2 2 0 0 0-2 2v8a2 2 0 0 0 2 2h8a2 2 0 0 0 2-2V12" fill="none" stroke="#e8e8e8" stroke-width="1.1"/><path d="M15.5 6.3L11 2v2.5C7.5 4.7 5.5 7 5.5 11c1.3-2.2 3-3 5.5-3v2.5z" fill="none" stroke="#e8e8e8" stroke-width="1.1" stroke-linejoin="round"/></svg>
<div class="a" style="left:1182px;top:219px;font-size:14px;line-height:16px;font-weight:bold;letter-spacing:-0.4px;color:#fff">Share invite</div>
<div class="a pav" style="left:1068px;top:247px;background:#dfe6d5;color:#4b5b34">AA</div>
<div class="a pn" style="top:254px">Adhe Eva A (Unverified)</div>
<svg class="a" style="left:1314px;top:254px" width="18" height="18" viewBox="0 0 18 18"><rect x="6.3" y="1.5" width="5.4" height="9" rx="2.7" fill="none" stroke="#e8e8e8" stroke-width="1.1"/><path d="M3.8 8.3a5.2 5.2 0 0 0 10.4 0M9 13.5v3" fill="none" stroke="#e8e8e8" stroke-width="1.1"/><path d="M2.3 1.8l14 14.5" stroke="#1f1f1f" stroke-width="2.6"/><path d="M2.3 1.8l14 14.5" stroke="#e8e8e8" stroke-width="1.1"/></svg>
<div class="a pav" style="left:1068px;top:295px;background:#d5ecf1;color:#2f6b78">AS</div>
<div class="a pn" style="top:302px">Agus Supratman (External)</div>
<svg class="a" style="left:1314px;top:302px" width="18" height="18" viewBox="0 0 18 18"><rect x="6.3" y="1.5" width="5.4" height="9" rx="2.7" fill="none" stroke="#e8e8e8" stroke-width="1.1"/><path d="M3.8 8.3a5.2 5.2 0 0 0 10.4 0M9 13.5v3" fill="none" stroke="#e8e8e8" stroke-width="1.1"/><path d="M2.3 1.8l14 14.5" stroke="#1f1f1f" stroke-width="2.6"/><path d="M2.3 1.8l14 14.5" stroke="#e8e8e8" stroke-width="1.1"/></svg>
<div class="a pav" style="left:1068px;top:343px;background:#e6ead5;color:#5b6b2c">A</div>
<div class="a pn" style="top:350px">ARP_DKPS_TNG (Unverified)</div>
<svg class="a" style="left:1314px;top:350px" width="18" height="18" viewBox="0 0 18 18"><rect x="6.3" y="1.5" width="5.4" height="9" rx="2.7" fill="none" stroke="#e8e8e8" stroke-width="1.1"/><path d="M3.8 8.3a5.2 5.2 0 0 0 10.4 0M9 13.5v3" fill="none" stroke="#e8e8e8" stroke-width="1.1"/><path d="M2.3 1.8l14 14.5" stroke="#1f1f1f" stroke-width="2.6"/><path d="M2.3 1.8l14 14.5" stroke="#e8e8e8" stroke-width="1.1"/></svg>
<div class="a" style="left:1064px;top:387px;width:40px;height:40px;border-radius:50%;border:2.5px solid #7f85f5"></div>
<div class="a pav" style="left:1068px;top:391px;background:#cfe9dc;color:#2b6b49">A</div>
<div class="a pn" style="top:398px;font-weight:bold;letter-spacing:-0.5px;color:#fff">Ayunda</div>
<svg class="a" style="left:1314px;top:398px" width="18" height="18" viewBox="0 0 18 18"><rect x="6" y="1" width="6" height="10.5" rx="3" fill="#fff"/><path d="M3.8 8.5a5.2 5.2 0 0 0 10.4 0M9 13.8v3" fill="none" stroke="#fff" stroke-width="1.2"/></svg>
<div class="a pav" style="left:1068px;top:439px;background:#d5e0ef;color:#2c4c7a">DP</div>
<div class="a pn" style="top:446px">DINAS PERTANIAN (Unverified)</div>
<svg class="a" style="left:1314px;top:446px" width="18" height="18" viewBox="0 0 18 18"><rect x="6.3" y="1.5" width="5.4" height="9" rx="2.7" fill="none" stroke="#e8e8e8" stroke-width="1.1"/><path d="M3.8 8.3a5.2 5.2 0 0 0 10.4 0M9 13.5v3" fill="none" stroke="#e8e8e8" stroke-width="1.1"/><path d="M2.3 1.8l14 14.5" stroke="#1f1f1f" stroke-width="2.6"/><path d="M2.3 1.8l14 14.5" stroke="#e8e8e8" stroke-width="1.1"/></svg>
<div class="a pav" style="left:1068px;top:487px;background:#d8e5e8;color:#35525a">D</div>
<div class="a pn" style="top:494px">Disperindag (Unverified)</div>
<svg class="a" style="left:1314px;top:494px" width="18" height="18" viewBox="0 0 18 18"><rect x="6.3" y="1.5" width="5.4" height="9" rx="2.7" fill="none" stroke="#e8e8e8" stroke-width="1.1"/><path d="M3.8 8.3a5.2 5.2 0 0 0 10.4 0M9 13.5v3" fill="none" stroke="#e8e8e8" stroke-width="1.1"/><path d="M2.3 1.8l14 14.5" stroke="#1f1f1f" stroke-width="2.6"/><path d="M2.3 1.8l14 14.5" stroke="#e8e8e8" stroke-width="1.1"/></svg>
<div class="a pav" style="left:1068px;top:535px;background:#d9d7f0;color:#48417a">D</div>
<div class="a pn" style="top:542px">Dwiyuli (Unverified)</div>
<svg class="a" style="left:1314px;top:542px" width="18" height="18" viewBox="0 0 18 18"><rect x="6.3" y="1.5" width="5.4" height="9" rx="2.7" fill="none" stroke="#e8e8e8" stroke-width="1.1"/><path d="M3.8 8.3a5.2 5.2 0 0 0 10.4 0M9 13.5v3" fill="none" stroke="#e8e8e8" stroke-width="1.1"/><path d="M2.3 1.8l14 14.5" stroke="#1f1f1f" stroke-width="2.6"/><path d="M2.3 1.8l14 14.5" stroke="#e8e8e8" stroke-width="1.1"/></svg>
<div class="a pav" style="left:1068px;top:583px;background:#f4d0e0;color:#9b2f5b">F</div>
<div class="a pn" style="top:590px">Fadli - Bappeda (Unverified)</div>
<svg class="a" style="left:1314px;top:590px" width="18" height="18" viewBox="0 0 18 18"><rect x="6.3" y="1.5" width="5.4" height="9" rx="2.7" fill="none" stroke="#e8e8e8" stroke-width="1.1"/><path d="M3.8 8.3a5.2 5.2 0 0 0 10.4 0M9 13.5v3" fill="none" stroke="#e8e8e8" stroke-width="1.1"/><path d="M2.3 1.8l14 14.5" stroke="#1f1f1f" stroke-width="2.6"/><path d="M2.3 1.8l14 14.5" stroke="#e8e8e8" stroke-width="1.1"/></svg>
<div class="a pav" style="left:1068px;top:631px;background:#f6d8d3;color:#8f3b31">IK</div>
<div class="a pn" style="top:638px">IKE KARTIKA (Unverified)</div>
<svg class="a" style="left:1314px;top:638px" width="18" height="18" viewBox="0 0 18 18"><rect x="6.3" y="1.5" width="5.4" height="9" rx="2.7" fill="none" stroke="#e8e8e8" stroke-width="1.1"/><path d="M3.8 8.3a5.2 5.2 0 0 0 10.4 0M9 13.5v3" fill="none" stroke="#e8e8e8" stroke-width="1.1"/><path d="M2.3 1.8l14 14.5" stroke="#1f1f1f" stroke-width="2.6"/><path d="M2.3 1.8l14 14.5" stroke="#e8e8e8" stroke-width="1.1"/></svg>
<div class="a pav" style="left:1068px;top:679px;background:#f3e4c4;color:#8a6a2a">KT</div>
<div class="a pn" style="top:686px;letter-spacing:-0.62px">KESBANGPOL KAB... (Unverified)</div>
<svg class="a" style="left:1314px;top:686px" width="18" height="18" viewBox="0 0 18 18"><rect x="6.3" y="1.5" width="5.4" height="9" rx="2.7" fill="none" stroke="#e8e8e8" stroke-width="1.1"/><path d="M3.8 8.3a5.2 5.2 0 0 0 10.4 0M9 13.5v3" fill="none" stroke="#e8e8e8" stroke-width="1.1"/><path d="M2.3 1.8l14 14.5" stroke="#1f1f1f" stroke-width="2.6"/><path d="M2.3 1.8l14 14.5" stroke="#e8e8e8" stroke-width="1.1"/></svg>
<!-- STRIP -->
<div class="a" style="left:6px;top:98px;width:32px;height:84px;border-radius:6px;background:#262626"></div>
<svg class="a" style="left:16px;top:133px" width="10" height="14" viewBox="0 0 10 14"><path d="M7.5 1L2 7l5.5 6" fill="none" stroke="#6e6e6e" stroke-width="1.2"/></svg>
<div class="a" style="left:42.0px;top:97px;width:85.5px;height:85.5px;border-radius:6px;border:1px solid #3a3a3a;background:linear-gradient(160deg,#2e2a24 0%,#1d1d1d 45%,#222428 100%)"></div>
<div class="a av" style="left:60.75px;top:116px;background:#f3e4c4;color:#8a6a2a">KT</div>
<div class="a" style="left:46px;top:155px;width:78px;height:24px;border-radius:4px;background:rgba(0,0,0,.55)"></div>
<div class="a" style="left:52px;top:160px;font-size:13px;color:#fff;letter-spacing:-1px;-webkit-text-stroke:0.4px #fff">K...</div>
<svg class="a" style="left:80px;top:160px" width="14" height="14" viewBox="0 0 14 14"><rect x="4.6" y="0.8" width="4.8" height="8" rx="2.4" fill="#fff"/><path d="M2.5 6.5a4.5 4.5 0 0 0 9 0M7 11v2.5" fill="none" stroke="#fff" stroke-width="1"/><path d="M1.5 1l11 12" stroke="#111" stroke-width="2.4"/><path d="M1.5 1l11 12" stroke="#fff" stroke-width="1"/></svg>
<svg class="a" style="left:103px;top:165px" width="14" height="4" viewBox="0 0 14 4"><rect x="0.8" y="0.8" width="2.4" height="2.4" rx="0.5" fill="#fff"/><rect x="5.8" y="0.8" width="2.4" height="2.4" rx="0.5" fill="#fff"/><rect x="10.8" y="0.8" width="2.4" height="2.4" rx="0.5" fill="#fff"/></svg>
<div class="a" style="left:131.5px;top:97px;width:85.5px;height:85.5px;border-radius:6px;border:1px solid #3a3a3a;background:linear-gradient(200deg,#2a2728 0%,#1f1f21 50%,#28262a 100%)"></div>
<div class="a av" style="left:150.25px;top:116px;background:#f6d8d3;color:#8f3b31">PT</div>
<div class="a" style="left:135.5px;top:155px;width:28px;height:24px;border-radius:4px;background:rgba(0,0,0,.55)"><svg width="14" height="14" viewBox="0 0 14 14" style="position:absolute;left:7px;top:5px"><rect x="4.6" y="0.8" width="4.8" height="8" rx="2.4" fill="#fff"/><path d="M2.5 6.5a4.5 4.5 0 0 0 9 0M7 11v2.5" fill="none" stroke="#fff" stroke-width="1"/><path d="M1.5 1l11 12" stroke="#111" stroke-width="2.4"/><path d="M1.5 1l11 12" stroke="#fff" stroke-width="1"/></svg></div>
<div class="a" style="left:220.5px;top:97px;width:86px;height:86px;border-radius:7px;border:3px solid #7f85f5;background:linear-gradient(180deg,#232427 0%,#26231f 100%)"></div>
<div class="a av" style="left:239.75px;top:116px;background:#cfe9dc;color:#2b6b49">A</div>
<div class="a" style="left:310.5px;top:97px;width:85.5px;height:85.5px;border-radius:6px;border:1px solid #3a3a3a;background:linear-gradient(200deg,#26262a 0%,#1d1d1f 60%,#222 100%)"></div>
<div class="a av" style="left:329.25px;top:116px;background:#f3d6d9;color:#8c3a4d">S</div>
<div class="a" style="left:314.5px;top:155px;width:28px;height:24px;border-radius:4px;background:rgba(0,0,0,.55)"><svg width="14" height="14" viewBox="0 0 14 14" style="position:absolute;left:7px;top:5px"><rect x="4.6" y="0.8" width="4.8" height="8" rx="2.4" fill="#fff"/><path d="M2.5 6.5a4.5 4.5 0 0 0 9 0M7 11v2.5" fill="none" stroke="#fff" stroke-width="1"/><path d="M1.5 1l11 12" stroke="#111" stroke-width="2.4"/><path d="M1.5 1l11 12" stroke="#fff" stroke-width="1"/></svg></div>
<div class="a" style="left:400.0px;top:97px;width:85.5px;height:85.5px;border-radius:6px;border:1px solid #3a3a3a;background:linear-gradient(160deg,#2a2a2c 0%,#1f2023 55%,#2b2623 100%)"></div>
<div class="a av" style="left:418.75px;top:116px;background:#dfe6d5;color:#4b5b34">AA</div>
<div class="a" style="left:404.0px;top:155px;width:28px;height:24px;border-radius:4px;background:rgba(0,0,0,.55)"><svg width="14" height="14" viewBox="0 0 14 14" style="position:absolute;left:7px;top:5px"><rect x="4.6" y="0.8" width="4.8" height="8" rx="2.4" fill="#fff"/><path d="M2.5 6.5a4.5 4.5 0 0 0 9 0M7 11v2.5" fill="none" stroke="#fff" stroke-width="1"/><path d="M1.5 1l11 12" stroke="#111" stroke-width="2.4"/><path d="M1.5 1l11 12" stroke="#fff" stroke-width="1"/></svg></div>
<div class="a" style="left:489.5px;top:97px;width:85.5px;height:85.5px;border-radius:6px;border:1px solid #3a3a3a;background:linear-gradient(200deg,#2c2622 0%,#1d1d1f 55%,#24262a 100%)"></div>
<div class="a av" style="left:508.25px;top:116px;background:#f2d4e6;color:#8b3366">YF</div>
<div class="a" style="left:493.5px;top:155px;width:28px;height:24px;border-radius:4px;background:rgba(0,0,0,.55)"><svg width="14" height="14" viewBox="0 0 14 14" style="position:absolute;left:7px;top:5px"><rect x="4.6" y="0.8" width="4.8" height="8" rx="2.4" fill="#fff"/><path d="M2.5 6.5a4.5 4.5 0 0 0 9 0M7 11v2.5" fill="none" stroke="#fff" stroke-width="1"/><path d="M1.5 1l11 12" stroke="#111" stroke-width="2.4"/><path d="M1.5 1l11 12" stroke="#fff" stroke-width="1"/></svg></div>
<div class="a" style="left:579.0px;top:97px;width:85.5px;height:85.5px;border-radius:6px;border:1px solid #3a3a3a;background:linear-gradient(160deg,#242629 0%,#1e2022 55%,#262a2e 100%)"></div>
<div class="a av" style="left:597.75px;top:116px;background:#d8e5e5;color:#35525a">D</div>
<div class="a" style="left:583.0px;top:155px;width:28px;height:24px;border-radius:4px;background:rgba(0,0,0,.55)"><svg width="14" height="14" viewBox="0 0 14 14" style="position:absolute;left:7px;top:5px"><rect x="4.6" y="0.8" width="4.8" height="8" rx="2.4" fill="#fff"/><path d="M2.5 6.5a4.5 4.5 0 0 0 9 0M7 11v2.5" fill="none" stroke="#fff" stroke-width="1"/><path d="M1.5 1l11 12" stroke="#111" stroke-width="2.4"/><path d="M1.5 1l11 12" stroke="#fff" stroke-width="1"/></svg></div>
<div class="a" style="left:668.5px;top:97px;width:85.5px;height:85.5px;border-radius:6px;border:1px solid #3a3a3a;background:linear-gradient(200deg,#262b2d 0%,#1f2224 55%,#232a2a 100%)"></div>
<div class="a av" style="left:687.25px;top:116px;background:#f4d0e0;color:#9b2f5b">F</div>
<div class="a" style="left:672.5px;top:155px;width:28px;height:24px;border-radius:4px;background:rgba(0,0,0,.55)"><svg width="14" height="14" viewBox="0 0 14 14" style="position:absolute;left:7px;top:5px"><rect x="4.6" y="0.8" width="4.8" height="8" rx="2.4" fill="#fff"/><path d="M2.5 6.5a4.5 4.5 0 0 0 9 0M7 11v2.5" fill="none" stroke="#fff" stroke-width="1"/><path d="M1.5 1l11 12" stroke="#111" stroke-width="2.4"/><path d="M1.5 1l11 12" stroke="#fff" stroke-width="1"/></svg></div>
<div class="a" style="left:758.0px;top:97px;width:85.5px;height:85.5px;border-radius:6px;border:1px solid #3a3a3a;background:linear-gradient(160deg,#2b2424 0%,#1f1f21 55%,#262628 100%)"></div>
<div class="a av" style="left:776.75px;top:116px;background:#d9d7f0;color:#48417a">D</div>
<div class="a" style="left:762.0px;top:155px;width:28px;height:24px;border-radius:4px;background:rgba(0,0,0,.55)"><svg width="14" height="14" viewBox="0 0 14 14" style="position:absolute;left:7px;top:5px"><rect x="4.6" y="0.8" width="4.8" height="8" rx="2.4" fill="#fff"/><path d="M2.5 6.5a4.5 4.5 0 0 0 9 0M7 11v2.5" fill="none" stroke="#fff" stroke-width="1"/><path d="M1.5 1l11 12" stroke="#111" stroke-width="2.4"/><path d="M1.5 1l11 12" stroke="#fff" stroke-width="1"/></svg></div>
<div class="a" style="left:848px;top:98px;width:32px;height:84px;border-radius:6px;background:#262626"></div>
<svg class="a" style="left:859px;top:133px" width="10" height="14" viewBox="0 0 10 14"><path d="M2.5 1L8 7l-5.5 6" fill="none" stroke="#e0e0e0" stroke-width="1.2"/></svg>
<div class="a" style="left:884.5px;top:97px;width:155.5px;height:85.5px;border-radius:6px;border:1px solid #3a3a3a;background:linear-gradient(160deg,#2d2822 0%,#242527 40%,#20262b 75%,#23303a 100%)"></div>
<div class="a av" style="left:938px;top:116px;background:#dbe6e8;color:#3a5a60">SH</div>
<div class="a" style="left:888.5px;top:155px;width:28px;height:24px;border-radius:4px;background:rgba(0,0,0,.55)"><svg width="14" height="14" viewBox="0 0 14 14" style="position:absolute;left:7px;top:5px"><rect x="4.6" y="0.8" width="4.8" height="8" rx="2.4" fill="#fff"/><path d="M2.5 6.5a4.5 4.5 0 0 0 9 0M7 11v2.5" fill="none" stroke="#fff" stroke-width="1"/><path d="M1.5 1l11 12" stroke="#111" stroke-width="2.4"/><path d="M1.5 1l11 12" stroke="#fff" stroke-width="1"/></svg></div>
</body></html>
